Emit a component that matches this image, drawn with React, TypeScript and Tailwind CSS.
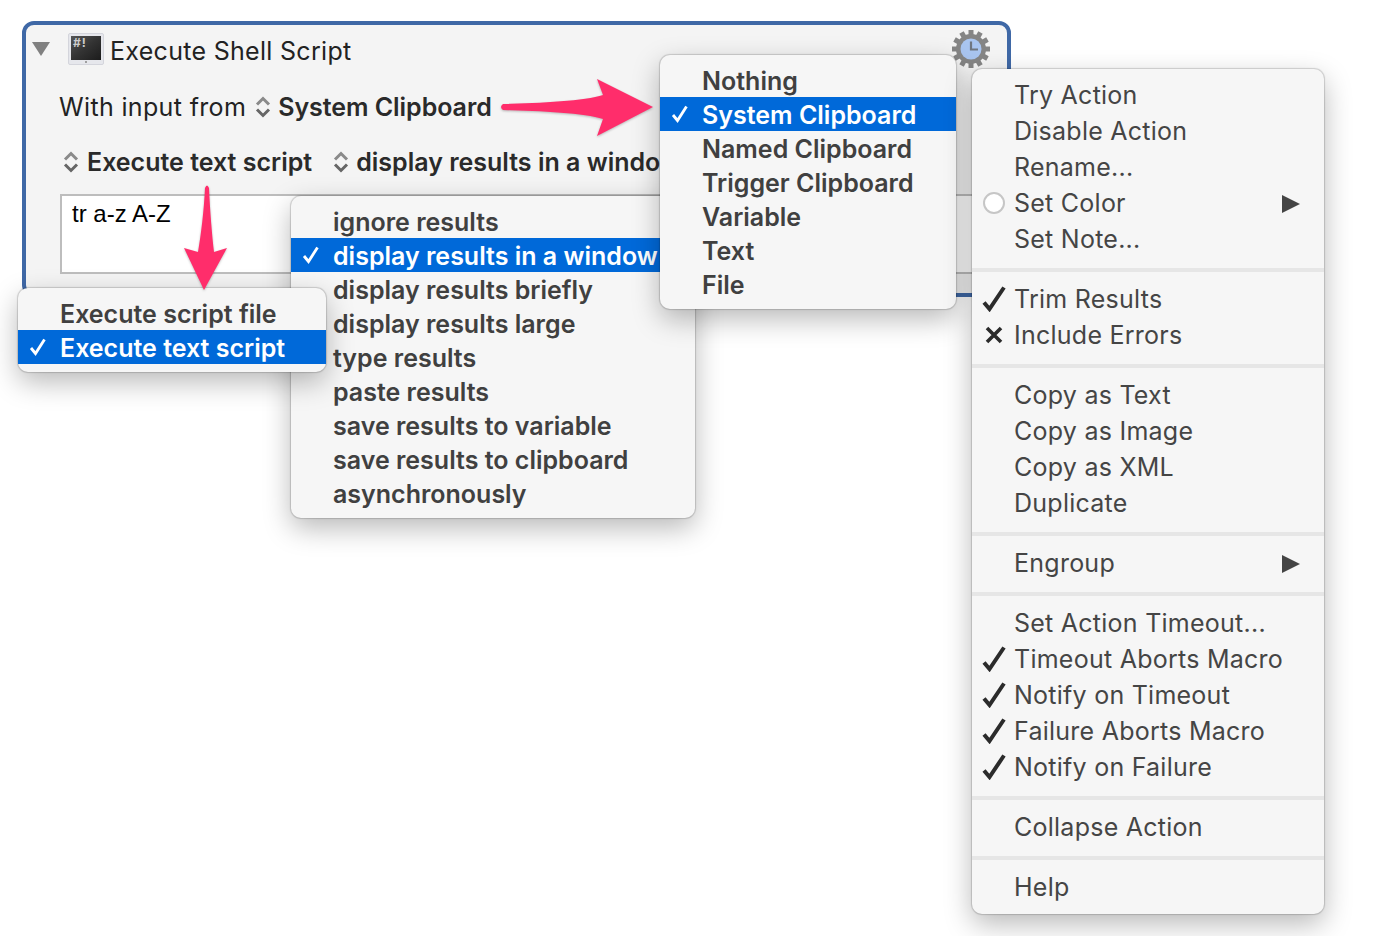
import React from 'react';

const font = "font-['Inter','Liberation_Sans',sans-serif]";

function Stepper() {
  return (
    <svg width="16" height="24" viewBox="0 0 16 24" fill="none" className="shrink-0">
      <path d="M2 9.5 L8 3.5 L14 9.5" stroke="#8a8a8a" strokeWidth="3" />
      <path d="M2 14.5 L8 20.5 L14 14.5" stroke="#666" strokeWidth="3" />
    </svg>
  );
}

function ThinCheck() {
  return (
    <svg width="18" height="18" viewBox="0 0 18 18" fill="none" className="absolute top-[8px]">
      <path d="M2 10 L6.5 15.5 L15.5 1.5" stroke="#fff" strokeWidth="2.8" />
    </svg>
  );
}

function BigCheck() {
  return (
    <svg width="24" height="26" viewBox="0 0 24 26" fill="none" className="absolute left-[10px] top-[5px]">
      <path d="M2 16.5 L7.5 23 L22 1.5" stroke="#2b2b2b" strokeWidth="4" />
    </svg>
  );
}

function PickMenu({ items, selected, left, top, width, indent, checkLeft }: { items: string[]; selected: string; left: string; top: string; width: string; indent: string; checkLeft: string }) {
  return (
    <div className={`absolute ${left} ${top} ${width} z-20 rounded-[10px] bg-[#f6f6f6] py-[8px] shadow-[0_0_1px_1px_rgba(0,0,0,0.16),0_10px_28px_rgba(0,0,0,0.28)]`}>
      {items.map((item) => (
        <div
          key={item}
          className={`relative h-[34px] ${indent} text-[25px] leading-[36px] font-semibold whitespace-nowrap ${item === selected ? 'bg-[#0069d9] text-white' : 'text-[#404040]'}`}
        >
          {item === selected && (
            <span className={`absolute ${checkLeft} top-0`}>
              <ThinCheck />
            </span>
          )}
          {item}
        </div>
      ))}
    </div>
  );
}

const gearGroups: { label: string; mark?: 'check' | 'x' | 'radio'; sub?: boolean }[][] = [
  [{ label: 'Try Action' }, { label: 'Disable Action' }, { label: 'Rename...' }, { label: 'Set Color', mark: 'radio', sub: true }, { label: 'Set Note...' }],
  [{ label: 'Trim Results', mark: 'check' }, { label: 'Include Errors', mark: 'x' }],
  [{ label: 'Copy as Text' }, { label: 'Copy as Image' }, { label: 'Copy as XML' }, { label: 'Duplicate' }],
  [{ label: 'Engroup', sub: true }],
  [
    { label: 'Set Action Timeout...' },
    { label: 'Timeout Aborts Macro', mark: 'check' },
    { label: 'Notify on Timeout', mark: 'check' },
    { label: 'Failure Aborts Macro', mark: 'check' },
    { label: 'Notify on Failure', mark: 'check' },
  ],
  [{ label: 'Collapse Action' }],
  [{ label: 'Help' }],
];

function GearMenu() {
  return (
    <div className="absolute left-[972px] top-[69px] z-30 h-[845px] w-[352px] rounded-[10px] bg-[#f6f6f6] pt-[8px] shadow-[0_0_1px_1px_rgba(0,0,0,0.16),0_10px_28px_rgba(0,0,0,0.28)]">
      {gearGroups.map((group, i) => (
        <div key={i}>
          {i > 0 && <div className="mt-[11px] mb-[9px] h-[4px] bg-[#e6e6e6]" />}
          {group.map((row) => (
            <div key={row.label} className="relative h-[36px] pl-[42px] text-[25px] leading-[37px] tracking-[0.25px] text-[#454545] whitespace-nowrap">
              {row.mark === 'check' && <BigCheck />}
              {row.mark === 'x' && (
                <svg width="18" height="18" viewBox="0 0 18 18" className="absolute left-[13px] top-[9px]" fill="none">
                  <path d="M2 2 L16 16 M16 2 L2 16" stroke="#2b2b2b" strokeWidth="3.6" />
                </svg>
              )}
              {row.mark === 'radio' && <span className="absolute left-[11px] top-[7px] h-[22px] w-[22px] rounded-full border-2 border-[#c6c6c6] bg-white" />}
              {row.label}
              {row.sub && (
                <svg width="18" height="18" viewBox="0 0 18 18" className="absolute left-[310px] top-[10px]">
                  <path d="M0 0 L18 9 L0 18 Z" fill="#444" />
                </svg>
              )}
            </div>
          ))}
        </div>
      ))}
    </div>
  );
}

function TerminalIcon() {
  return (
    <div className="relative flex h-[32px] w-[36px] shrink-0 items-start justify-center rounded-[2px] border border-[#d4d5dc] bg-[#e6e7ec] pt-[2px]">
      <div className="h-[24px] w-[30px] bg-gradient-to-br from-[#555] via-[#333] to-[#1c1c1c] pl-[2px] text-[12px] leading-[13px] font-bold tracking-[1px] text-[#ccc]">#!</div>
      <span className="absolute bottom-[1px] left-[16px] h-[2px] w-[2px] rounded-full bg-[#888]" />
    </div>
  );
}

function GearIcon() {
  const teeth = [0, 30, 60, 90, 120, 150];
  return (
    <svg width="40" height="40" viewBox="0 0 40 40" className="ml-auto mr-[16px] mt-[-1px] shrink-0">
      {teeth.map((a) => (
        <rect key={a} x="17.5" y="1" width="5" height="38" fill="#858585" transform={`rotate(${a} 20 20)`} />
      ))}
      <circle cx="20" cy="20" r="15" fill="#858585" />
      <circle cx="20" cy="20" r="10.5" fill="#a9c5f0" />
      <path d="M20 12.5 V20.5 H27" stroke="#6f7680" strokeWidth="2.2" fill="none" />
    </svg>
  );
}

export default function App() {
  return (
    <div className={`relative h-[936px] w-[1386px] overflow-hidden bg-white ${font}`}>
      {/* action panel */}
      <div className="absolute left-[22px] top-[21px] h-[276px] w-[989px] rounded-[12px] border-4 border-[#3f68a6] bg-[#f4f4f4]">
        <div className="flex h-[40px] items-center pt-[8px]">
          <svg width="18" height="14" viewBox="0 0 18 14" className="ml-[6px] mr-[18px] shrink-0">
            <path d="M0 0 H18 L9 14 Z" fill="#808080" />
          </svg>
          <TerminalIcon />
          <span className="ml-[6px] mt-[5px] text-[25px] tracking-[0.3px] text-[#222]">Execute Shell Script</span>
          <GearIcon />
        </div>
        <div className="mt-[26px] flex h-[32px] items-center pl-[33px]">
          <span className="mr-[9px] mt-[2px] text-[25px] tracking-[0.35px] text-[#222]">With input from</span>
          <Stepper />
          <span className="ml-[7px] mt-[2px] text-[25px] font-semibold tracking-[-0.05px] text-[#2a2a2a]">System Clipboard</span>
        </div>
        <div className="mt-[23px] flex h-[32px] items-center pl-[37px] whitespace-nowrap">
          <Stepper />
          <span className="ml-[8px] mt-[2px] text-[25px] font-semibold text-[#2a2a2a]">Execute text script</span>
          <span className="ml-[21px]">
            <Stepper />
          </span>
          <span className="ml-[7px] mt-[2px] text-[25px] font-semibold text-[#2a2a2a]">display results in a window</span>
        </div>
        <div className="mt-[16px] ml-[34px] mr-[17px] h-[80px] border-2 border-[#bdbdbd] bg-white pl-[10px] text-[24px] leading-[36px] text-black font-['Liberation_Sans',sans-serif]">
          tr a-z A-Z
        </div>
      </div>

      <PickMenu
        left="left-[291px]"
        top="top-[196px]"
        width="w-[404px]"
        indent="pl-[42px]"
        checkLeft="left-[11px]"
        selected="display results in a window"
        items={['ignore results', 'display results in a window', 'display results briefly', 'display results large', 'type results', 'paste results', 'save results to variable', 'save results to clipboard', 'asynchronously']}
      />
      <PickMenu
        left="left-[18px]"
        top="top-[288px]"
        width="w-[308px]"
        indent="pl-[42px]"
        checkLeft="left-[11px]"
        selected="Execute text script"
        items={['Execute script file', 'Execute text script']}
      />
      <PickMenu
        left="left-[660px]"
        top="top-[55px]"
        width="w-[296px]"
        indent="pl-[42px]"
        checkLeft="left-[11px]"
        selected="System Clipboard"
        items={['Nothing', 'System Clipboard', 'Named Clipboard', 'Trigger Clipboard', 'Variable', 'Text', 'File']}
      />
      <GearMenu />

      {/* callout arrows */}
      <svg width="1386" height="936" viewBox="0 0 1386 936" className="pointer-events-none absolute left-0 top-0 z-40">
        <path
          d="M503 104 C540 103 585 101 603 95 L597 79 L653 107 L597 136 L603 119 C585 113 540 111 503 110 Q499 107 503 104 Z"
          fill="#ff2d6b"
          style={{ filter: 'drop-shadow(0 1px 1px rgba(0,0,0,0.25))' }}
        />
        <path
          d="M205 188 Q207 183 209 188 C210 210 212 235 214 252 L227 248 L204 290 L184 248 L198 252 C201 235 204 210 205 188 Z"
          fill="#ff2d6b"
          style={{ filter: 'drop-shadow(0 1px 1px rgba(0,0,0,0.25))' }}
        />
      </svg>
    </div>
  );
}
